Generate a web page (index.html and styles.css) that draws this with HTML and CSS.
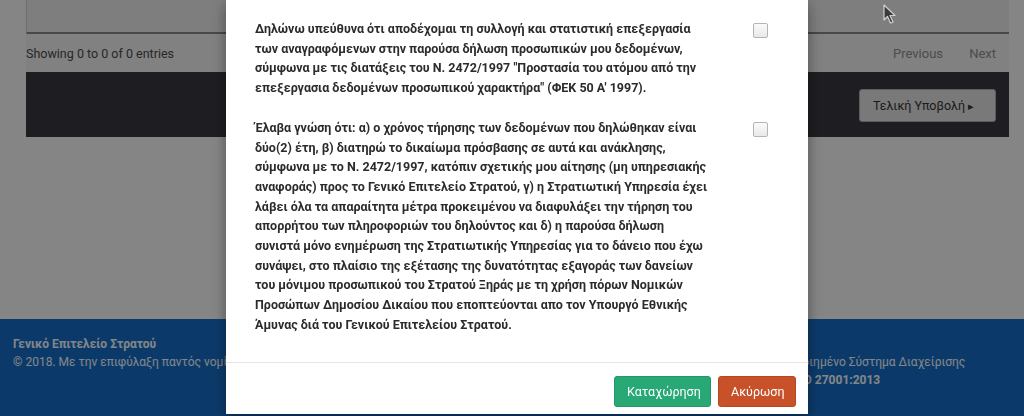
FILE: index.html
```html
<!DOCTYPE html>
<html>

<head>
    <title>Δήλωση</title>
    <link rel="stylesheet" href="styles.css">
</head>

<body>
    <div class="page">
        <div class="content">
            <div class="table-box"></div>
            <div class="table-info">
                <span>Showing 0 to 0 of 0 entries</span>
                <div class="paging">
                    <a>Previous</a>
                    <a>Next</a>
                </div>
            </div>
            <div class="submit-bar">
                <button class="btn-final">Τελική Υποβολή <span class="caret">&#9656;</span></button>
            </div>
        </div>
        <footer class="site-footer">
            <div class="footer-left">
                <b>Γενικό Επιτελείο Στρατού</b><br>
                © 2018. Με την επιφύλαξη παντός νομίμου δικαιώματος.
            </div>
            <div class="footer-right">
                Πιστοποιημένο Σύστημα Διαχείρισης<br>
                <b>κατά ISO 27001:2013</b>
            </div>
        </footer>
    </div>

    <div class="backdrop"></div>

    <div class="modal">
        <div class="modal-body">
            <div class="statement">
                <p>Δηλώνω υπεύθυνα ότι αποδέχομαι τη συλλογή και στατιστική επεξεργασία<br>
                    των αναγραφόμενων στην παρούσα δήλωση προσωπικών μου δεδομένων,<br>
                    σύμφωνα με τις διατάξεις του Ν. 2472/1997 "Προστασία του ατόμου από την<br>
                    επεξεργασια δεδομένων προσωπικού χαρακτήρα" (ΦΕΚ 50 Α' 1997).</p>
                <input type="checkbox">
            </div>
            <div class="statement">
                <p>Έλαβα γνώση ότι: α) ο χρόνος τήρησης των δεδομένων που δηλώθηκαν είναι<br>
                    δύο(2) έτη, β) διατηρώ το δικαίωμα πρόσβασης σε αυτά και ανάκλησης,<br>
                    σύμφωνα με το Ν. 2472/1997, κατόπιν σχετικής μου αίτησης (μη υπηρεσιακής<br>
                    αναφοράς) προς το Γενικό Επιτελείο Στρατού, γ) η Στρατιωτική Υπηρεσία έχει<br>
                    λάβει όλα τα απαραίτητα μέτρα προκειμένου να διαφυλάξει την τήρηση του<br>
                    απορρήτου των πληροφοριών του δηλούντος και δ) η παρούσα δήλωση<br>
                    συνιστά μόνο ενημέρωση της Στρατιωτικής Υπηρεσίας για το δάνειο που έχω<br>
                    συνάψει, στο πλαίσιο της εξέτασης της δυνατότητας εξαγοράς των δανείων<br>
                    του μόνιμου προσωπικού του Στρατού Ξηράς με τη χρήση πόρων Νομικών<br>
                    Προσώπων Δημοσίου Δικαίου που εποπτεύονται απο τον Υπουργό Εθνικής<br>
                    Άμυνας διά του Γενικού Επιτελείου Στρατού.</p>
                <input type="checkbox">
            </div>
        </div>
        <div class="modal-footer">
            <button class="btn btn-save">Καταχώρηση</button>
            <button class="btn btn-cancel">Ακύρωση</button>
        </div>
    </div>

    <svg class="cursor" width="14" height="20" viewBox="0 0 14 20">
        <path d="M1 1 L1 16 L4.5 12.5 L7.5 19 L10 18 L7 11.5 L12 11.5 Z" fill="#3a3a3a" stroke="#cfcfcf" stroke-width="1.2" stroke-linejoin="round"/>
    </svg>
</body>

</html>
```

FILE: styles.css
```css
body {
    margin: 0;
    padding: 0;
    font-family: Roboto, "Noto Sans", sans-serif;
    background-color: #f2f3f5;
    height: 416px;
    overflow: hidden;
}

.page {
    height: 416px;
    display: flex;
    flex-direction: column;
}

.content {
    margin: 0 15px 0 26px;
    background-color: #e6e6e6;
}

.table-box {
    height: 32px;
    border-left: 1px solid #c8c8c8;
    border-bottom: 2px solid #838383;
    background-color: #e6e6e6;
}

.table-info {
    display: flex;
    justify-content: space-between;
    align-items: center;
    height: 38px;
    font-size: 12.5px;
    color: #484848;
    background-color: #ebebeb;
}

.paging a {
    color: #8a8a8a;
    font-size: 13px;
    margin-left: 24px;
    margin-right: 13px;
}

.paging a + a {
    margin-left: 10px;
}

.submit-bar {
    height: 65px;
    background-color: #38383f;
    display: flex;
    justify-content: flex-end;
    align-items: center;
    padding-right: 13px;
}

.btn-final {
    height: 33px;
    width: 137px;
    background-color: #dcdcdc;
    border: 1px solid #a9a9a9;
    border-radius: 3px;
    color: #333;
    font-family: inherit;
    font-size: 12.5px;
    text-align: left;
    padding-left: 13px;
    margin-top: 1px;
}

.caret {
    font-size: 11px;
}

.site-footer {
    margin-top: auto;
    height: 100px;
    background-color: #156bc2;
    border-top: 3px solid #f4f5f6;
    color: #f0f3f8;
    font-size: 12px;
    line-height: 18px;
    display: flex;
    justify-content: space-between;
    padding: 16px 0 0 13px;
    box-sizing: border-box;
}

.footer-right {
    padding-top: 18px;
    width: 261px;
}

.backdrop {
    position: fixed;
    top: 0;
    left: 0;
    right: 0;
    bottom: 0;
    background-color: rgba(0, 0, 0, 0.45);
}

/* modal over the dimmed page */
.modal {
    position: fixed;
    top: 0;
    left: 226px;
    width: 582px;
    height: 414px;
    background-color: #fff;
    box-shadow: 0 4px 14px rgba(0, 0, 0, 0.4);
    display: flex;
    flex-direction: column;
}

.modal-body {
    padding: 19px 0 0 29px;
    flex: 1;
}

.statement {
    display: flex;
    align-items: flex-start;
    margin-bottom: 20px;
}

.statement p {
    margin: 0;
    width: 470px;
    white-space: nowrap;
    font-size: 12.5px;
    font-weight: bold;
    line-height: 19.7px;
    color: #2b2b2b;
}

.statement input {
    -webkit-appearance: none;
    appearance: none;
    margin: 4px 0 0 28px;
    width: 15px;
    height: 15px;
    border: 1px solid #b4b4b4;
    border-radius: 2px;
    background: linear-gradient(#fafafa, #e9e9e9);
    box-sizing: border-box;
}

.modal-footer {
    border-top: 1px solid #e5e5e5;
    padding: 13px 12px 7px 0;
    display: flex;
    justify-content: flex-end;
    gap: 7px;
}

.btn {
    height: 31px;
    border: 1px solid transparent;
    border-radius: 3px;
    color: #fff;
    font-family: inherit;
    font-size: 12.5px;
    padding: 0 12px;
}

.btn-save {
    background-color: #27a874;
    border-color: #23966a;
    width: 97px;
}

.btn-cancel {
    background-color: #c8512a;
    border-color: #b54824;
    width: 78px;
}

.cursor {
    position: fixed;
    top: 4px;
    left: 883px;
}
```
